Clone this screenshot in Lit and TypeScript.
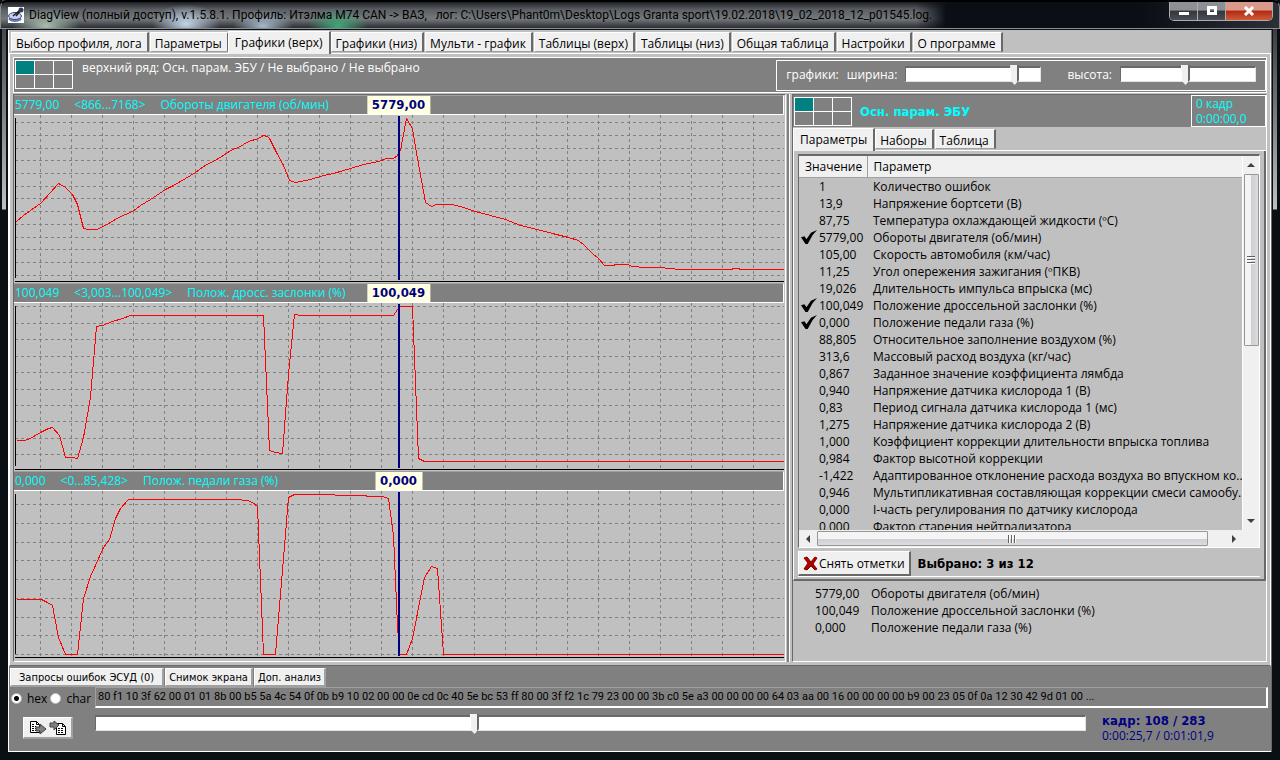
import { LitElement, html, svg, css } from "lit";
import { customElement, property } from "lit/decorators.js";
import { classMap } from "lit/directives/class-map.js";

interface Chart {
  value: string;
  range: string;
  name: string;
  top: number;
  grid: number[];
  points: string;
}

const CHARTS: Chart[] = [
  {
    value: "5779,00",
    range: "<866...7168>",
    name: "Обороты двигателя (об/мин)",
    top: 115,
    grid: [122, 135, 148, 160, 173, 186, 198, 211, 224, 237, 249, 262, 275],
    points:
      "16,221 23,215 30,210 40,203 50,192 58,183 65,187 72,194 77,204 80,216 83,228 88,229 96,229 103,226 110,222 118,217 132,211 140,205 150,199 165,189 173,185 180,181 195,172 203,166 218,158 232,149 238,147 248,141 258,138 263,135 267,136 269,138 276,152 283,165 289,180 292,181 295,182 300,181 310,179 323,175 333,173 350,168 363,164 378,161 386,158 393,158 397,155 400,150 406,118 412,128 417,158 425,202 431,206 436,204 452,204 463,207 475,211 490,215 505,219 520,225 537,229 552,233 568,237 578,240 584,245 592,253 598,258 604,265 612,265 616,264 627,264 632,266 645,267 662,267 667,268 682,269 731,269 733,268 738,268 740,269 784,269",
  },
  {
    value: "100,049",
    range: "<3,003...100,049>",
    name: "Полож. дросс. заслонки (%)",
    top: 303,
    grid: [306, 323, 339, 356, 372, 389, 405, 421, 438, 454],
    points:
      "16,440 23,440 28,439 35,435 42,431 48,428 52,427 59,435 65,457 74,457 75,458 77,458 83,437 90,397 93,361 96,326 102,325 112,321 122,318 130,315 263,315 269,450 275,452 282,453 288,374 294,314 297,314 298,315 393,315 397,309 399,306 412,306 418,458 424,461 784,461",
  },
  {
    value: "0,000",
    range: "<0...85,428>",
    name: "Полож. педали газа (%)",
    top: 491,
    grid: [504, 523, 542, 560, 579, 598, 617, 635, 654],
    points:
      "16,599 41,599 47,602 52,605 58,637 65,654 77,654 83,598 90,576 103,547 109,539 115,518 120,508 128,499 131,499 235,499 247,500 252,502 257,506 263,654 275,654 288,497 294,494 334,494 335,495 365,495 367,496 382,496 388,498 393,535 397,625 399,654 406,654 412,638 424,577 431,566 437,568 443,654 784,654",
  },
];

const PARAMS: [string, string, boolean?][] = [
  ["1", "Количество ошибок"],
  ["13,9", "Напряжение бортсети (В)"],
  ["87,75", "Температура охлаждающей жидкости (ºC)"],
  ["5779,00", "Обороты двигателя (об/мин)", true],
  ["105,00", "Скорость автомобиля (км/час)"],
  ["11,25", "Угол опережения зажигания (ºПКВ)"],
  ["19,026", "Длительность импульса впрыска (мс)"],
  ["100,049", "Положение дроссельной заслонки (%)", true],
  ["0,000", "Положение педали газа (%)", true],
  ["88,805", "Относительное заполнение воздухом (%)"],
  ["313,6", "Массовый расход воздуха (кг/час)"],
  ["0,867", "Заданное значение коэффициента лямбда"],
  ["0,940", "Напряжение датчика кислорода 1 (В)"],
  ["0,83", "Период сигнала датчика кислорода 1 (мс)"],
  ["1,275", "Напряжение датчика кислорода 2 (В)"],
  ["1,000", "Коэффициент коррекции длительности впрыска топлива"],
  ["0,984", "Фактор высотной коррекции"],
  ["-1,422", "Адаптированное отклонение расхода воздуха во впускном ко..."],
  ["0,946", "Мультипликативная составляющая коррекции смеси самообу..."],
  ["0,000", "I-часть регулирования по датчику кислорода"],
  ["0,000", "Фактор старения нейтрализатора"],
];

const TABS = [
  "Выбор профиля, лога",
  "Параметры",
  "Графики (верх)",
  "Графики (низ)",
  "Мульти - график",
  "Таблицы (верх)",
  "Таблицы (низ)",
  "Общая таблица",
  "Настройки",
  "О программе",
];

const HEX =
  "80 f1 10 3f 62 00 01 01 8b 00 b5 5a 4c 54 0f 0b b9 10 02 00 00 0e cd 0c 40 5e bc 53 ff 80 00 3f f2 1c 79 23 00 00 3b c0 5e a3 00 00 00 00 64 03 aa 00 16 00 00 00 00 b9 00 23 05 0f 0a 12 30 42 9d 01 00 ...";

const base = css`
  * {
    box-sizing: border-box;
  }
  button {
    font: inherit;
    color: #000;
    margin: 0;
    padding: 0;
    border: 0;
    white-space: nowrap;
  }
`;

@customElement("tab-strip")
class TabStrip extends LitElement {
  @property({ attribute: false }) items: string[] = [];
  @property({ type: Number }) active = 0;

  static styles = [
    base,
    css`
      :host {
        display: flex;
        align-items: flex-end;
        height: 24px;
        padding-left: 2px;
        border-bottom: 1px solid #fff;
        gap: 1px;
      }
      .tab {
        height: 20px;
        padding: 2px 5px 0 4px;
        background: #f0f0f0;
        border: 1px solid #fff;
        border-right: 2px solid #696969;
        border-bottom-color: #a0a0a0;
        margin-bottom: 1px;
      }
      .active {
        height: 23px;
        padding: 0 6px 2px;
        margin: 0 -1px -1px -2px;
        border-bottom: 0;
        position: relative;
      }
    `,
  ];

  render() {
    return this.items.map(
      (t, i) => html`<button class=${classMap({ tab: true, active: i === this.active })}>${t}</button>`,
    );
  }
}

@customElement("cell-map")
class CellMap extends LitElement {
  static styles = css`
    :host {
      display: grid;
      grid-template-columns: repeat(3, 18px);
      grid-template-rows: repeat(2, 13px);
      gap: 1px;
      padding: 1px;
      background: #fff;
      flex: none;
    }
    .cell {
      background: #808080;
    }
    .on {
      background: #008080;
    }
  `;

  render() {
    return [0, 1, 2, 3, 4, 5].map((i) => html`<span class=${classMap({ cell: true, on: i === 0 })}></span>`);
  }
}

@customElement("track-bar")
class TrackBar extends LitElement {
  @property() label = "";
  @property({ type: Number }) max = 100;
  @property({ type: Number }) value = 0;

  static styles = css`
    :host {
      display: block;
    }
    .range {
      appearance: none;
      display: block;
      width: 100%;
      height: 20px;
      margin: 0;
      background: transparent;
    }
    .range::-webkit-slider-runnable-track {
      box-sizing: border-box;
      height: 16px;
      background: #fff;
      border: 1px solid #e3e3e3;
      border-top: 2px solid #696969;
      border-left: 1px solid #696969;
    }
    .range::-webkit-slider-thumb {
      appearance: none;
      width: 9px;
      height: 20px;
      margin-top: -3px;
      border: 0;
      background: linear-gradient(90deg, #fff 1px, #f0f0f0 1px 7px, #696969 7px);
      clip-path: polygon(0 0, 100% 0, 100% 15px, 50% 100%, 0 15px);
    }
  `;

  render() {
    return html`<input
      class="range"
      type="range"
      aria-label=${this.label}
      min="0"
      .max=${String(this.max)}
      .value=${String(this.value)}
    />`;
  }
}

@customElement("line-chart")
class LineChart extends LitElement {
  @property({ attribute: false }) chart!: Chart;

  static styles = css`
    :host {
      display: flex;
      flex-direction: column;
      flex: 1;
      min-height: 0;
    }
    .head {
      box-sizing: border-box;
      position: relative;
      height: 20px;
      display: flex;
      gap: 15px;
      align-items: center;
      background: #808080;
      color: #0ff;
      border-top: 1px solid #a0a0a0;
      border-right: 1px solid #fff;
      border-bottom: 1px solid #fff;
      white-space: nowrap;
      padding: 0 0 2px 1px;
    }
    .badge {
      position: absolute;
      top: 0;
      bottom: 0;
      left: 50%;
      transform: translateX(-50%);
      padding: 0 5px;
      background: #ffffe1;
      color: #000080;
      font: bold 13px/18px "DejaVu Sans Condensed", "DejaVu Sans", sans-serif;
    }
    .plot {
      display: block;
      flex: 1;
      min-height: 0;
      width: 100%;
    }
    .grid {
      stroke: #808080;
      stroke-dasharray: 3 3;
    }
    .axis {
      stroke: #000;
    }
    .curve {
      fill: none;
      stroke: #f00;
    }
    .cursor {
      stroke: #000080;
      stroke-width: 2px;
    }
  `;

  render() {
    const c = this.chart;
    const t = c.top;
    const cols = Array.from({ length: 24 }, (_, i) => 40.5 + i * 31);
    return html`
      <div class="head">
        <span>${c.value}</span><span>${c.range}</span><span>${c.name}</span>
        <span class="badge">${c.value}</span>
      </div>
      <svg class="plot" viewBox="14 ${t} 770 168" preserveAspectRatio="none" shape-rendering="crispEdges">
        ${cols.map((x) => svg`<path class="grid" d="M${x} ${t}V${t + 165}" />`)}
        ${c.grid.map((y) => svg`<path class="grid" d="M15 ${y + 0.5}H784" />`)}
        <path class="axis" d="M15.5 ${t + 3}V${t + 163}M15 ${t + 166.5}H784" />
        <g transform="translate(.5 .5)"><polyline class="curve" points=${c.points} /></g>
        <path class="cursor" d="M399 ${t + 1}V${t + 165}" />
      </svg>
    `;
  }
}

@customElement("param-list")
class ParamList extends LitElement {
  static styles = [
    base,
    css`
      :host {
        box-sizing: border-box;
        display: grid;
        grid-template-columns: minmax(0, 1fr) 16px;
        grid-template-rows: minmax(0, 1fr) 17px;
        border: 1px solid #fff;
        border-top: 2px solid #696969;
        border-left: 1px solid #696969;
        background: #f0f0f0;
      }
      .view {
        overflow: hidden;
        background: #c0c0c0;
        border-right: 1px solid #fff;
      }
      .table {
        border-collapse: collapse;
        table-layout: fixed;
        width: 100%;
      }
      .c1 {
        width: 68px;
      }
      th {
        height: 21px;
        padding: 1px 6px 0;
        text-align: left;
        font-weight: normal;
        background: #f0f0f0;
        border-bottom: 1px solid #a0a0a0;
      }
      th + th {
        border-left: 1px solid #a0a0a0;
      }
      td {
        height: 17px;
        padding: 0 0 0 6px;
        line-height: 17px;
        white-space: nowrap;
      }
      td:first-child {
        padding: 0;
      }
      .value {
        display: flex;
        gap: 2px;
        padding-left: 2px;
        align-items: center;
      }
      .tick {
        appearance: none;
        width: 16px;
        height: 14px;
        margin: 0;
        flex: none;
      }
      .tick:checked {
        background: #000;
        clip-path: polygon(0 52%, 22% 44%, 34% 66%, 62% 20%, 100% 0, 72% 38%, 42% 100%, 28% 100%);
      }
      .bar {
        display: flex;
        align-items: center;
        background: #f0f0f0;
      }
      .vert {
        flex-direction: column;
      }
      .arrow {
        flex: none;
        width: 18px;
        height: 18px;
        fill: #404040;
      }
      .thumb {
        border: 1px solid #979797;
        border-radius: 1px;
        display: grid;
        place-items: center;
      }
      .vert .thumb {
        width: 15px;
        flex: 0 0 46%;
        background: linear-gradient(90deg, #f4f4f4 50%, #cfcfd3 50%, #dcdce0);
      }
      .horz .thumb {
        height: 15px;
        flex: 0 0 88%;
        background: linear-gradient(#f4f4f4 50%, #cfcfd3 50%, #dcdce0);
      }
      .grip {
        width: 8px;
        height: 8px;
        background: repeating-linear-gradient(#606060 0 1px, #fff 1px 2px, transparent 2px 3px);
      }
      .horz .grip {
        background: repeating-linear-gradient(90deg, #606060 0 1px, #fff 1px 2px, transparent 2px 3px);
      }
      .fill {
        flex: 1;
      }
    `,
  ];

  render() {
    return html`
      <div class="view">
        <table class="table">
          <colgroup><col class="c1" /><col /></colgroup>
          <thead>
            <tr><th>Значение</th><th>Параметр</th></tr>
          </thead>
          <tbody>
            ${PARAMS.map(
              ([v, n, on]) => html`<tr>
                <td>
                  <span class="value"><input class="tick" type="checkbox" aria-label=${n} .checked=${!!on} />${v}</span>
                </td>
                <td>${n}</td>
              </tr>`,
            )}
          </tbody>
        </table>
      </div>
      <div class="bar vert">
        <svg class="arrow" viewBox="0 0 18 18"><path d="M5 11l4-4 4 4z" /></svg>
        <span class="thumb"><span class="grip"></span></span>
        <span class="fill"></span>
        <svg class="arrow" viewBox="0 0 18 18"><path d="M5 7h8l-4 4z" /></svg>
      </div>
      <div class="bar horz">
        <svg class="arrow" viewBox="0 0 18 18"><path d="M11 5v8l-4-4z" /></svg>
        <span class="thumb"><span class="grip"></span></span>
        <span class="fill"></span>
        <svg class="arrow" viewBox="0 0 18 18"><path d="M7 5l4 4-4 4z" /></svg>
      </div>
    `;
  }
}

@customElement("app-root")
class AppRoot extends LitElement {
  static styles = [
    base,
    css`
      :host {
        display: flex;
        flex-direction: column;
        height: 100vh;
        padding: 0 8px 8px;
        box-sizing: border-box;
        background: linear-gradient(#45494d 30px, #c0c0c0 209px, transparent 210px) left 2px top / 4px 100% no-repeat,
          linear-gradient(#3a3e44 30px, #c0c0c0 209px, transparent 210px) right 3px top / 4px 100% no-repeat, #0a0f14;
        font: 12px/15px "Open Sans", "Noto Sans", sans-serif;
        color: #000;
      }
      .title {
        display: flex;
        align-items: center;
        gap: 5px;
        height: 29px;
        flex: none;
        margin: 0 -8px;
        padding: 0 6px 0 7px;
        border: 1px solid #8a8f94;
        border-top: 2px solid #000;
        border-radius: 7px 7px 0 0;
        font: 12px/16px Roboto, "Open Sans", sans-serif;
        background: radial-gradient(ellipse 34px 18px at 45px 24px, #a9bfae, transparent),
          radial-gradient(ellipse 34px 20px at 185px 22px, #c3d5ea, transparent),
          radial-gradient(ellipse 30px 16px at 262px 24px, #a5b8ca, transparent),
          radial-gradient(ellipse 30px 18px at 337px 24px, #3fa877, transparent),
          linear-gradient(90deg, transparent 915px, #0b0f15 945px 1140px, #2c3036),
          linear-gradient(#1c1f23, #5c6064 30%, #75797c 65%, #2a2d31);
      }
      .logo {
        width: 16px;
        height: 16px;
        flex: none;
      }
      .caption {
        flex: 1;
        white-space: pre;
        overflow: hidden;
      }
      .winbtns {
        display: flex;
        align-self: flex-start;
        border: 1px solid #a9adb1;
        border-top: 0;
        border-radius: 0 0 5px 5px;
        overflow: hidden;
      }
      .winbtn {
        width: 28px;
        height: 18px;
        display: grid;
        place-items: center;
        background: linear-gradient(#8d9196 45%, #33373c 50%, #4b4f55);
        border-right: 1px solid #a9adb1;
      }
      .close {
        width: 46px;
        border: 0;
        background: linear-gradient(#d99a8c 45%, #b02a12 50%, #d05a38);
      }
      .client {
        flex: 1;
        min-height: 0;
        display: flex;
        flex-direction: column;
        margin-top: 1px;
        background: #c0c0c0;
        border-left: 1px solid #fff;
        border-right: 1px solid #696969;
      }
      .page {
        flex: 1;
        min-height: 0;
        display: flex;
        flex-direction: column;
        gap: 1px;
        padding: 3px 3px;
        border-left: 1px solid #fff;
        border-right: 1px solid #fff;
        border-bottom: 1px solid #696969;
      }
      .top {
        display: flex;
        align-items: flex-start;
        flex: none;
        height: 36px;
        border: 1px solid #fff;
        background: #808080;
        color: #fff;
        padding: 2px 0 1px 1px;
        gap: 9px;
      }
      .row-title {
        flex: 1;
      }
      .group {
        display: flex;
        align-items: center;
        align-self: stretch;
        border: 1px solid #fff;
        padding: 0 9px 2px;
        gap: 8px;
      }
      .group .slider {
        align-self: flex-start;
        width: 136px;
        margin: 3px 18px 0 0;
      }
      .group .slider:last-child {
        margin-right: 0;
      }
      .main {
        flex: 1;
        min-height: 0;
        display: grid;
        grid-template-columns: minmax(0, 773fr) 6px minmax(0, 475fr);
        grid-template-rows: minmax(0, 1fr);
      }
      .charts {
        display: flex;
        flex-direction: column;
        border-left: 1px solid #696969;
        border-top: 1px solid #696969;
        border-bottom: 1px solid #fff;
        border-right: 1px solid #fff;
        min-width: 0;
        padding: 0 1px 2px 0;
      }
      .splitter {
        margin: 0 2px 0 1px;
        border-left: 2px solid #808080;
        border-right: 1px solid #fff;
      }
      .side {
        min-width: 0;
        display: flex;
        flex-direction: column;
        border: 1px solid #696969;
        border-bottom: 1px solid #fff;
        border-right: 1px solid #fff;
      }
      .side-head {
        display: flex;
        align-items: center;
        gap: 8px;
        flex: none;
        height: 32px;
        padding: 0 0 0 1px;
        background: #808080;
        color: #0ff;
      }
      .side-name {
        flex: 1;
        font: bold 13px/15px "DejaVu Sans Condensed", "DejaVu Sans", sans-serif;
      }
      .frame-box {
        display: flex;
        flex-direction: column;
        width: 75px;
        height: 32px;
        border: 1px solid #fff;
        padding: 0 4px;
      }
      .side-body {
        flex: 1;
        min-height: 0;
        display: flex;
        flex-direction: column;
        padding: 3px 4px 2px;
        border-left: 1px solid #fff;
        border-bottom: 2px solid #696969;
        border-right: 2px solid #696969;
      }
      .list {
        flex: 1;
        min-height: 0;
      }
      .actions {
        display: flex;
        align-items: center;
        gap: 7px;
        flex: none;
        height: 29px;
        padding-top: 2px;
        border-bottom: 1px solid #fff;
      }
      .chosen {
        font: bold 13px/15px "DejaVu Sans Condensed", "DejaVu Sans", sans-serif;
      }
      .clear {
        display: flex;
        align-items: center;
        gap: 1px;
        height: 25px;
        padding: 2px 4px 0;
        background: #f0f0f0;
        border: 1px solid #fff;
        border-right: 2px solid #696969;
        border-bottom: 2px solid #696969;
      }
      .summary {
        flex: none;
        height: 80px;
        padding: 4px 0 0 22px;
      }
      .summary td {
        padding: 0;
        height: 17px;
        line-height: 17px;
      }
      .summary table {
        border-collapse: collapse;
      }
      .summary td:first-child {
        width: 56px;
      }
      .bottom {
        display: flex;
        flex-direction: column;
        flex: none;
        height: 86px;
        background: #808080;
        border-bottom: 1px solid #fff;
        padding: 2px 3px 0 1px;
      }
      .buttons {
        display: flex;
        gap: 1px;
        font: 11px/15px "DejaVu Sans Condensed", "DejaVu Sans", sans-serif;
      }
      .push {
        height: 19px;
        padding: 1px 3px 0;
        background: #f0f0f0;
        border: 1px solid #fff;
        border-right: 2px solid #a0a0a0;
        border-bottom: 2px solid #a0a0a0;
        line-height: 15px;
      }
      .wide {
        padding: 1px 8px 0;
      }
      .grid {
        display: grid;
        grid-template-columns: 82px minmax(0, 1fr) 179px;
        column-gap: 3px;
      }
      .modes {
        display: flex;
        align-items: center;
        gap: 3px;
        padding: 2px 0 0 1px;
      }
      .radio {
        appearance: none;
        width: 11px;
        height: 11px;
        margin: 0 1px 0 0;
        border-radius: 50%;
        background: #fff;
        border: 1px solid #c0c0c0;
      }
      .radio:checked {
        background: radial-gradient(circle, #000 2px, #fff 3px);
      }
      .mode {
        display: flex;
        align-items: center;
        gap: 4px;
      }
      .hex {
        grid-column: 2 / 4;
        height: 21px;
        padding: 0 2px;
        border: 1px solid #a0a0a0;
        border-right: 2px solid #fff;
        border-bottom: 2px solid #fff;
        font: 11px/18px Roboto, "Open Sans", sans-serif;
        white-space: nowrap;
        overflow: hidden;
      }
      .io {
        display: flex;
        align-items: center;
        justify-content: center;
        gap: 3px;
        width: 50px;
        height: 22px;
        margin: 9px 0 0 13px;
        background: #f0f0f0;
        border: 1px solid #fff;
        border-right: 2px solid #a0a0a0;
        border-bottom: 2px solid #a0a0a0;
      }
      .seek {
        margin-top: 5px;
      }
      .pos {
        margin-top: 5px;
        padding-left: 13px;
        color: #000080;
      }
      .frame-no {
        font: bold 13px/15px "DejaVu Sans Condensed", "DejaVu Sans", sans-serif;
      }
    `,
  ];

  render() {
    return html`
      <header class="title">
        <svg class="logo" viewBox="0 0 16 16">
          <rect width="16" height="16" fill="#fff" />
          <ellipse cx="7" cy="12" rx="6.500" ry="3" fill="#6c78b8" />
          <ellipse cx="7" cy="9" rx="6.500" ry="3.500" fill="#c8cfe8" stroke="#3c4680" />
          <path d="M5 9L12 3M8 9l6-7" stroke="#222" stroke-width="1.500" />
          <circle cx="13" cy="3" r="2.500" fill="#333c5c" />
        </svg>
        <span class="caption"
          >DiagView (полный доступ), v.1.5.8.1. Профиль: Итэлма M74 CAN -> ВАЗ,   лог: C:\\Users\\Phant0m\\Desktop\\Logs Granta sport\\19.02.2018\\19_02_2018_12_p01545.log.</span
        >
        <div class="winbtns">
          <button class="winbtn" aria-label="Свернуть">
            <svg width="12" height="10"><path d="M1 6h10v3H1z" fill="#fff" /></svg>
          </button>
          <button class="winbtn" aria-label="Развернуть">
            <svg width="12" height="10"><path d="M1 0h10v9H1zM4 3v3h4V3z" fill="#fff" fill-rule="evenodd" /></svg>
          </button>
          <button class="winbtn close" aria-label="Закрыть">
            <svg width="12" height="10"><path d="M2 1l8 8M10 1L2 9" stroke="#fff" stroke-width="3" /></svg>
          </button>
        </div>
      </header>
      <main class="client">
        <tab-strip .items=${TABS} .active=${2}></tab-strip>
        <div class="page">
          <div class="top">
            <cell-map></cell-map>
            <span class="row-title">верхний ряд: Осн. парам. ЭБУ / Не выбрано / Не выбрано</span>
            <div class="group">
              <span>графики:</span>
              <span>ширина:</span>
              <track-bar class="slider" label="ширина" .value=${83}></track-bar>
              <span>высота:</span>
              <track-bar class="slider" label="высота" .value=${48}></track-bar>
            </div>
          </div>
          <div class="main">
            <section class="charts">${CHARTS.map((c) => html`<line-chart .chart=${c}></line-chart>`)}</section>
            <div class="splitter"></div>
            <section class="side">
              <div class="side-head">
                <cell-map></cell-map>
                <span class="side-name">Осн. парам. ЭБУ</span>
                <div class="frame-box"><span>0 кадр</span><span>0:00:00,0</span></div>
              </div>
              <tab-strip .items=${["Параметры", "Наборы", "Таблица"]} .active=${0}></tab-strip>
              <div class="side-body">
                <param-list class="list"></param-list>
                <div class="actions">
                  <button class="clear">
                    <svg width="15" height="15" viewBox="0 0 15 15">
                      <path d="M1 2l3-1 4 5 4-5 2 1-4 6 4 5-2 1-4-4-4 4-3-1 4-6z" fill="#b00000" stroke="#800000" />
                    </svg>
                    Снять отметки
                  </button>
                  <span class="chosen">Выбрано: 3 из 12</span>
                </div>
              </div>
              <div class="summary">
                <table>
                  ${PARAMS.filter((p) => p[2]).map(([v, n]) => html`<tr><td>${v}</td><td>${n}</td></tr>`)}
                </table>
              </div>
            </section>
          </div>
        </div>
        <footer class="bottom">
          <div class="buttons">
            <button class="push wide">Запросы ошибок ЭСУД (0)</button>
            <button class="push">Снимок экрана</button>
            <button class="push">Доп. анализ</button>
          </div>
          <div class="grid">
            <div class="modes">
              <label class="mode"><input class="radio" type="radio" name="mode" checked />hex</label>
              <label class="mode"><input class="radio" type="radio" name="mode" />char</label>
            </div>
            <output class="hex">${HEX}</output>
            <button class="io" aria-label="Экспорт и импорт">
              <svg width="38" height="16" viewBox="0 0 38 16">
                <g fill="#fff" stroke="#000">
                  <path d="M1.500 1.500h6l3 3v8h-9zM7.500 1.500v3h3" />
                  <path d="M27.500 3.500h6l3 3v8h-9zM33.500 3.500v3h3" />
                </g>
                <path d="M3 4.500h3M3 6.500h4M3 8.500h4M3 10.500h4M29 8.500h5M29 10.500h6M29 12.500h6" stroke="#000" stroke-dasharray="2 1" />
                <path d="M7 7h4V4l6 5-6 5v-3H7z" fill="#808080" stroke="#404040" />
                <path d="M21 3h4V1l5 4-5 5V7h-4z" fill="#808080" stroke="#404040" />
              </svg>
            </button>
            <track-bar class="seek" label="кадр" .max=${283} .value=${108}></track-bar>
            <div class="pos"><span class="frame-no">кадр: 108 / 283</span><br />0:00:25,7 / 0:01:01,9</div>
          </div>
        </footer>
      </main>
    `;
  }
}
